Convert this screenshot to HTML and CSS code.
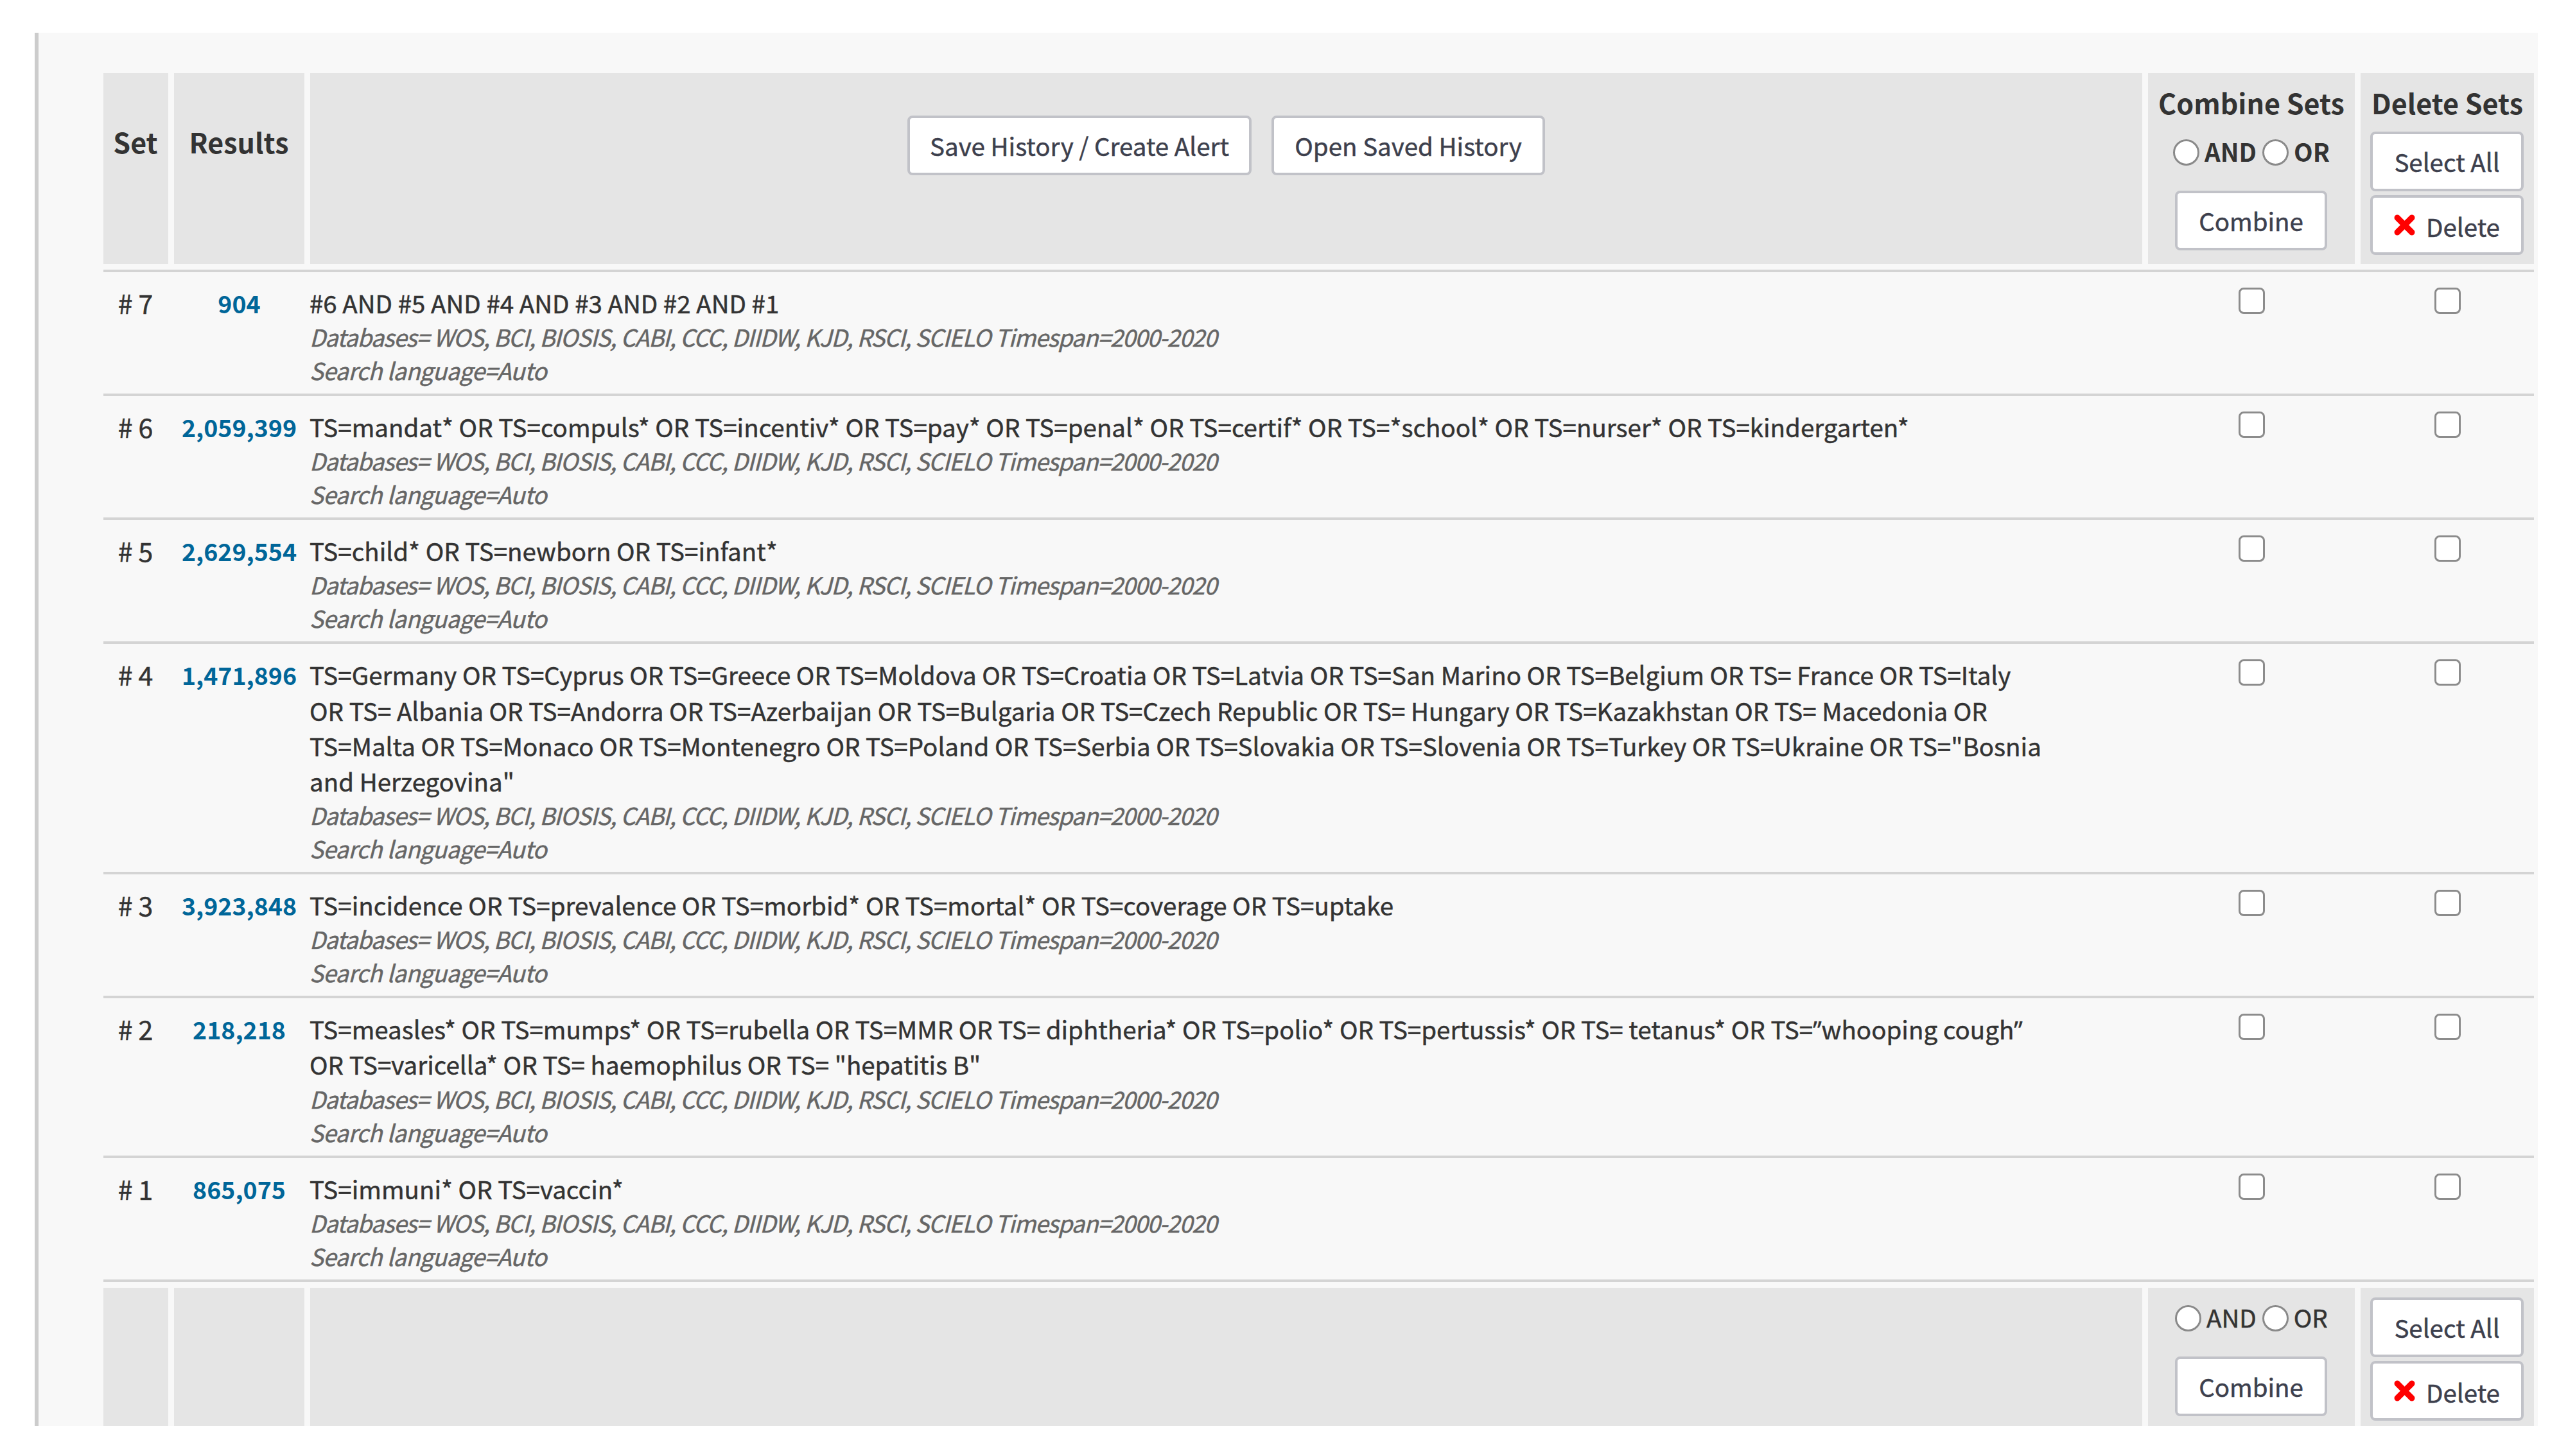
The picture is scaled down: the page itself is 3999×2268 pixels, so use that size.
FILE: index.html
```
<!DOCTYPE html>
<html lang="en">
<head>
  <meta charset="UTF-8">
  <meta name="viewport" content="width=device-width, initial-scale=1.0">
  <title>Search History</title>
  <link rel="stylesheet" href="styles.css">
</head>
<body>
  <div class="history-panel">
    <form class="history-table">
      <div class="bar head">
        <div class="cell title">Set</div>
        <div class="cell title">Results</div>
        <div class="cell actions">
          <button type="button" class="btn save">Save History / Create Alert</button>
          <button type="button" class="btn open">Open Saved History</button>
        </div>
        <div class="cell combine">
          <h2>Combine Sets</h2>
          <div class="operators">
            <input type="radio" name="op" id="op-and"><label for="op-and">AND</label>
            <input type="radio" name="op" id="op-or"><label for="op-or">OR</label>
          </div>
          <button type="button" class="btn combine-btn">Combine</button>
        </div>
        <div class="cell delete">
          <h2>Delete Sets</h2>
          <button type="button" class="btn select-btn">Select All</button>
          <button type="button" class="btn delete-btn">
            <svg class="x-icon" viewBox="0 0 32 32" preserveAspectRatio="none"><path d="M5 5 L27 27 M27 5 L5 27"/></svg>
            <span>Delete</span>
          </button>
        </div>
      </div>

      <div class="row">
        <div class="set"># 7</div>
        <div class="count"><a>904</a></div>
        <div class="query">
          <p>#6 AND #5 AND #4 AND #3 AND #2 AND #1</p>
          <p class="info">Databases= WOS, BCI, BIOSIS, CABI, CCC, DIIDW, KJD, RSCI, SCIELO Timespan=2000-2020</p>
          <p class="info lang">Search language=Auto</p>
        </div>
        <div class="check"><input type="checkbox"></div>
        <div class="check"><input type="checkbox"></div>
      </div>

      <div class="row">
        <div class="set"># 6</div>
        <div class="count"><a>2,059,399</a></div>
        <div class="query">
          <p>TS=mandat* OR TS=compuls* OR TS=incentiv* OR TS=pay* OR TS=penal* OR TS=certif* OR TS=*school* OR TS=nurser* OR TS=kindergarten*</p>
          <p class="info">Databases= WOS, BCI, BIOSIS, CABI, CCC, DIIDW, KJD, RSCI, SCIELO Timespan=2000-2020</p>
          <p class="info lang">Search language=Auto</p>
        </div>
        <div class="check"><input type="checkbox"></div>
        <div class="check"><input type="checkbox"></div>
      </div>

      <div class="row">
        <div class="set"># 5</div>
        <div class="count"><a>2,629,554</a></div>
        <div class="query">
          <p>TS=child* OR TS=newborn OR TS=infant*</p>
          <p class="info">Databases= WOS, BCI, BIOSIS, CABI, CCC, DIIDW, KJD, RSCI, SCIELO Timespan=2000-2020</p>
          <p class="info lang">Search language=Auto</p>
        </div>
        <div class="check"><input type="checkbox"></div>
        <div class="check"><input type="checkbox"></div>
      </div>

      <div class="row">
        <div class="set"># 4</div>
        <div class="count"><a>1,471,896</a></div>
        <div class="query">
          <p>TS=Germany OR TS=Cyprus OR TS=Greece OR TS=Moldova OR TS=Croatia OR TS=Latvia OR TS=San Marino OR TS=Belgium OR TS= France OR TS=Italy<br>
          OR TS= Albania OR TS=Andorra OR TS=Azerbaijan OR TS=Bulgaria OR TS=Czech Republic OR TS= Hungary OR TS=Kazakhstan OR TS= Macedonia OR<br>
          TS=Malta OR TS=Monaco OR TS=Montenegro OR TS=Poland OR TS=Serbia OR TS=Slovakia OR TS=Slovenia OR TS=Turkey OR TS=Ukraine OR TS="Bosnia<br>
          and Herzegovina"</p>
          <p class="info">Databases= WOS, BCI, BIOSIS, CABI, CCC, DIIDW, KJD, RSCI, SCIELO Timespan=2000-2020</p>
          <p class="info lang">Search language=Auto</p>
        </div>
        <div class="check"><input type="checkbox"></div>
        <div class="check"><input type="checkbox"></div>
      </div>

      <div class="row">
        <div class="set"># 3</div>
        <div class="count"><a>3,923,848</a></div>
        <div class="query">
          <p>TS=incidence OR TS=prevalence OR TS=morbid* OR TS=mortal* OR TS=coverage OR TS=uptake</p>
          <p class="info">Databases= WOS, BCI, BIOSIS, CABI, CCC, DIIDW, KJD, RSCI, SCIELO Timespan=2000-2020</p>
          <p class="info lang">Search language=Auto</p>
        </div>
        <div class="check"><input type="checkbox"></div>
        <div class="check"><input type="checkbox"></div>
      </div>

      <div class="row">
        <div class="set"># 2</div>
        <div class="count"><a>218,218</a></div>
        <div class="query">
          <p>TS=measles* OR TS=mumps* OR TS=rubella OR TS=MMR OR TS= diphtheria* OR TS=polio* OR TS=pertussis* OR TS= tetanus* OR TS=<span class="quote">”</span>whooping cough<span class="quote">”</span><br>
          OR TS=varicella* OR TS= haemophilus OR TS= "hepatitis B"</p>
          <p class="info">Databases= WOS, BCI, BIOSIS, CABI, CCC, DIIDW, KJD, RSCI, SCIELO Timespan=2000-2020</p>
          <p class="info lang">Search language=Auto</p>
        </div>
        <div class="check"><input type="checkbox"></div>
        <div class="check"><input type="checkbox"></div>
      </div>

      <div class="row last">
        <div class="set"># 1</div>
        <div class="count"><a>865,075</a></div>
        <div class="query">
          <p>TS=immuni* OR TS=vaccin*</p>
          <p class="info">Databases= WOS, BCI, BIOSIS, CABI, CCC, DIIDW, KJD, RSCI, SCIELO Timespan=2000-2020</p>
          <p class="info lang">Search language=Auto</p>
        </div>
        <div class="check"><input type="checkbox"></div>
        <div class="check"><input type="checkbox"></div>
      </div>

      <div class="bar foot">
        <div class="cell"></div>
        <div class="cell"></div>
        <div class="cell"></div>
        <div class="cell combine">
          <div class="operators">
            <input type="radio" name="op2" id="op2-and"><label for="op2-and">AND</label>
            <input type="radio" name="op2" id="op2-or"><label for="op2-or">OR</label>
          </div>
          <button type="button" class="btn combine-btn">Combine</button>
        </div>
        <div class="cell delete">
          <button type="button" class="btn select-btn">Select All</button>
          <button type="button" class="btn delete-btn">
            <svg class="x-icon" viewBox="0 0 32 32" preserveAspectRatio="none"><path d="M5 5 L27 27 M27 5 L5 27"/></svg>
            <span>Delete</span>
          </button>
        </div>
      </div>
    </form>
  </div>
</body>
</html>
```
FILE: styles.css
```
* {
  margin: 0;
  padding: 0;
  box-sizing: border-box;
}

body {
  background: #fff;
  color: #333;
  font-family: "Noto Sans CJK SC", "Noto Sans", sans-serif;
  font-size: 38.5px;
  -webkit-text-stroke: 0.5px;
  padding: 51px 47px 47px 54px;
}

.history-panel {
  height: 2170px;
  background: #f8f8f8;
  border-left: 6px solid #ccc;
  padding: 63px 6px 0 101px;
  overflow: hidden;
}

/* Grey bars at the top and bottom share the column grid with the rows */
.bar,
.row {
  display: grid;
  grid-template-columns: 101px 203px 2853px 322px 270px;
  column-gap: 9px;
}

.head {
  height: 296.6px;
  margin-bottom: 9px;
}

.foot {
  height: 215px;
  margin-top: 9px;
}

.cell {
  background: #e5e5e5;
}

.title,
.cell h2 {
  font-size: 43px;
  font-weight: bold;
  line-height: 56px;
  text-align: center;
  white-space: nowrap;
  -webkit-text-stroke: 0;
}

.title {
  padding: 78px 1px 0 0;
}

.actions {
  display: flex;
  align-items: flex-start;
  justify-content: center;
  gap: 31px;
  padding: 66px 0 0;
}

/* Buttons */
.btn {
  display: flex;
  align-items: center;
  justify-content: center;
  height: 93px;
  background: #fff;
  border: 4px solid #c1c2c8;
  border-radius: 8px;
  color: #3d404d;
  font-family: inherit;
  font-size: 38.5px;
  line-height: 56px;
  white-space: nowrap;
}

.save {
  width: 536px;
}

.save,
.open {
  padding-bottom: 1px;
}

.open {
  width: 426px;
}

.combine-btn {
  width: 237px;
  margin-left: 42px;
  padding-bottom: 2px;
}

.select-btn,
.delete-btn {
  width: 239px;
  margin-left: 15px;
}

.select-btn {
  padding-bottom: 2px;
}

.delete-btn {
  margin-top: 5.5px;
  padding-top: 3px;
}

.delete-btn span {
  margin-left: 17px;
}

.x-icon {
  width: 33px;
  height: 33px;
  margin-top: -2px;
}

.x-icon path {
  fill: none;
  stroke: #f00;
  stroke-width: 9;
  stroke-linecap: round;
}

/* AND / OR */
.operators {
  display: flex;
  align-items: center;
  height: 41px;
}

.operators label {
  margin: -6px 9px 0 8px;
  line-height: 56px;
}

.operators input {
  appearance: none;
  width: 41px;
  height: 41px;
  background: #fff;
  border: 3px solid #8a8a8a;
  border-radius: 50%;
  flex: none;
}

.head .cell h2 {
  padding-top: 17px;
}

.head .operators {
  margin: 30px 0 39px 39px;
  font-weight: bold;
  -webkit-text-stroke: 0;
}

.head .select-btn {
  margin-top: 18px;
}

.foot .combine {
  padding-top: 27px;
}

.foot .operators {
  margin: 0 0 39px 42px;
}

.foot .delete {
  padding-top: 15px;
}

/* History rows */
.row {
  border-top: 4px solid #d4d4d4;
  padding: 20px 0 9.8px;
}

.row.last {
  border-bottom: 4px solid #d4d4d4;
}

.set,
.count {
  text-align: center;
  line-height: 55.1px;
  white-space: nowrap;
}

.set {
  font-size: 41px;
  padding-right: 1px;
}

.count {
  font-size: 37.5px;
  font-weight: bold;
  color: #006699;
  -webkit-text-stroke: 0;
}

.query {
  margin-left: -1px;
  white-space: nowrap;
}

.query p {
  line-height: 55.1px;
}

.query .info {
  color: #666;
  font-size: 36.5px;
  font-style: italic;
  line-height: 52.2px;
  letter-spacing: -1px;
}

.query .lang {
  letter-spacing: -0.6px;
}

/* The CJK face draws this mark full width */
.quote {
  font-family: "Open Sans", "Noto Sans", sans-serif;
  line-height: 1;
}

.check {
  text-align: center;
  line-height: 0;
}

.check input {
  appearance: none;
  width: 41px;
  height: 41px;
  margin-top: 4px;
  background: #fff;
  border: 3.5px solid #8c8c8c;
  border-radius: 8px;
}
```
